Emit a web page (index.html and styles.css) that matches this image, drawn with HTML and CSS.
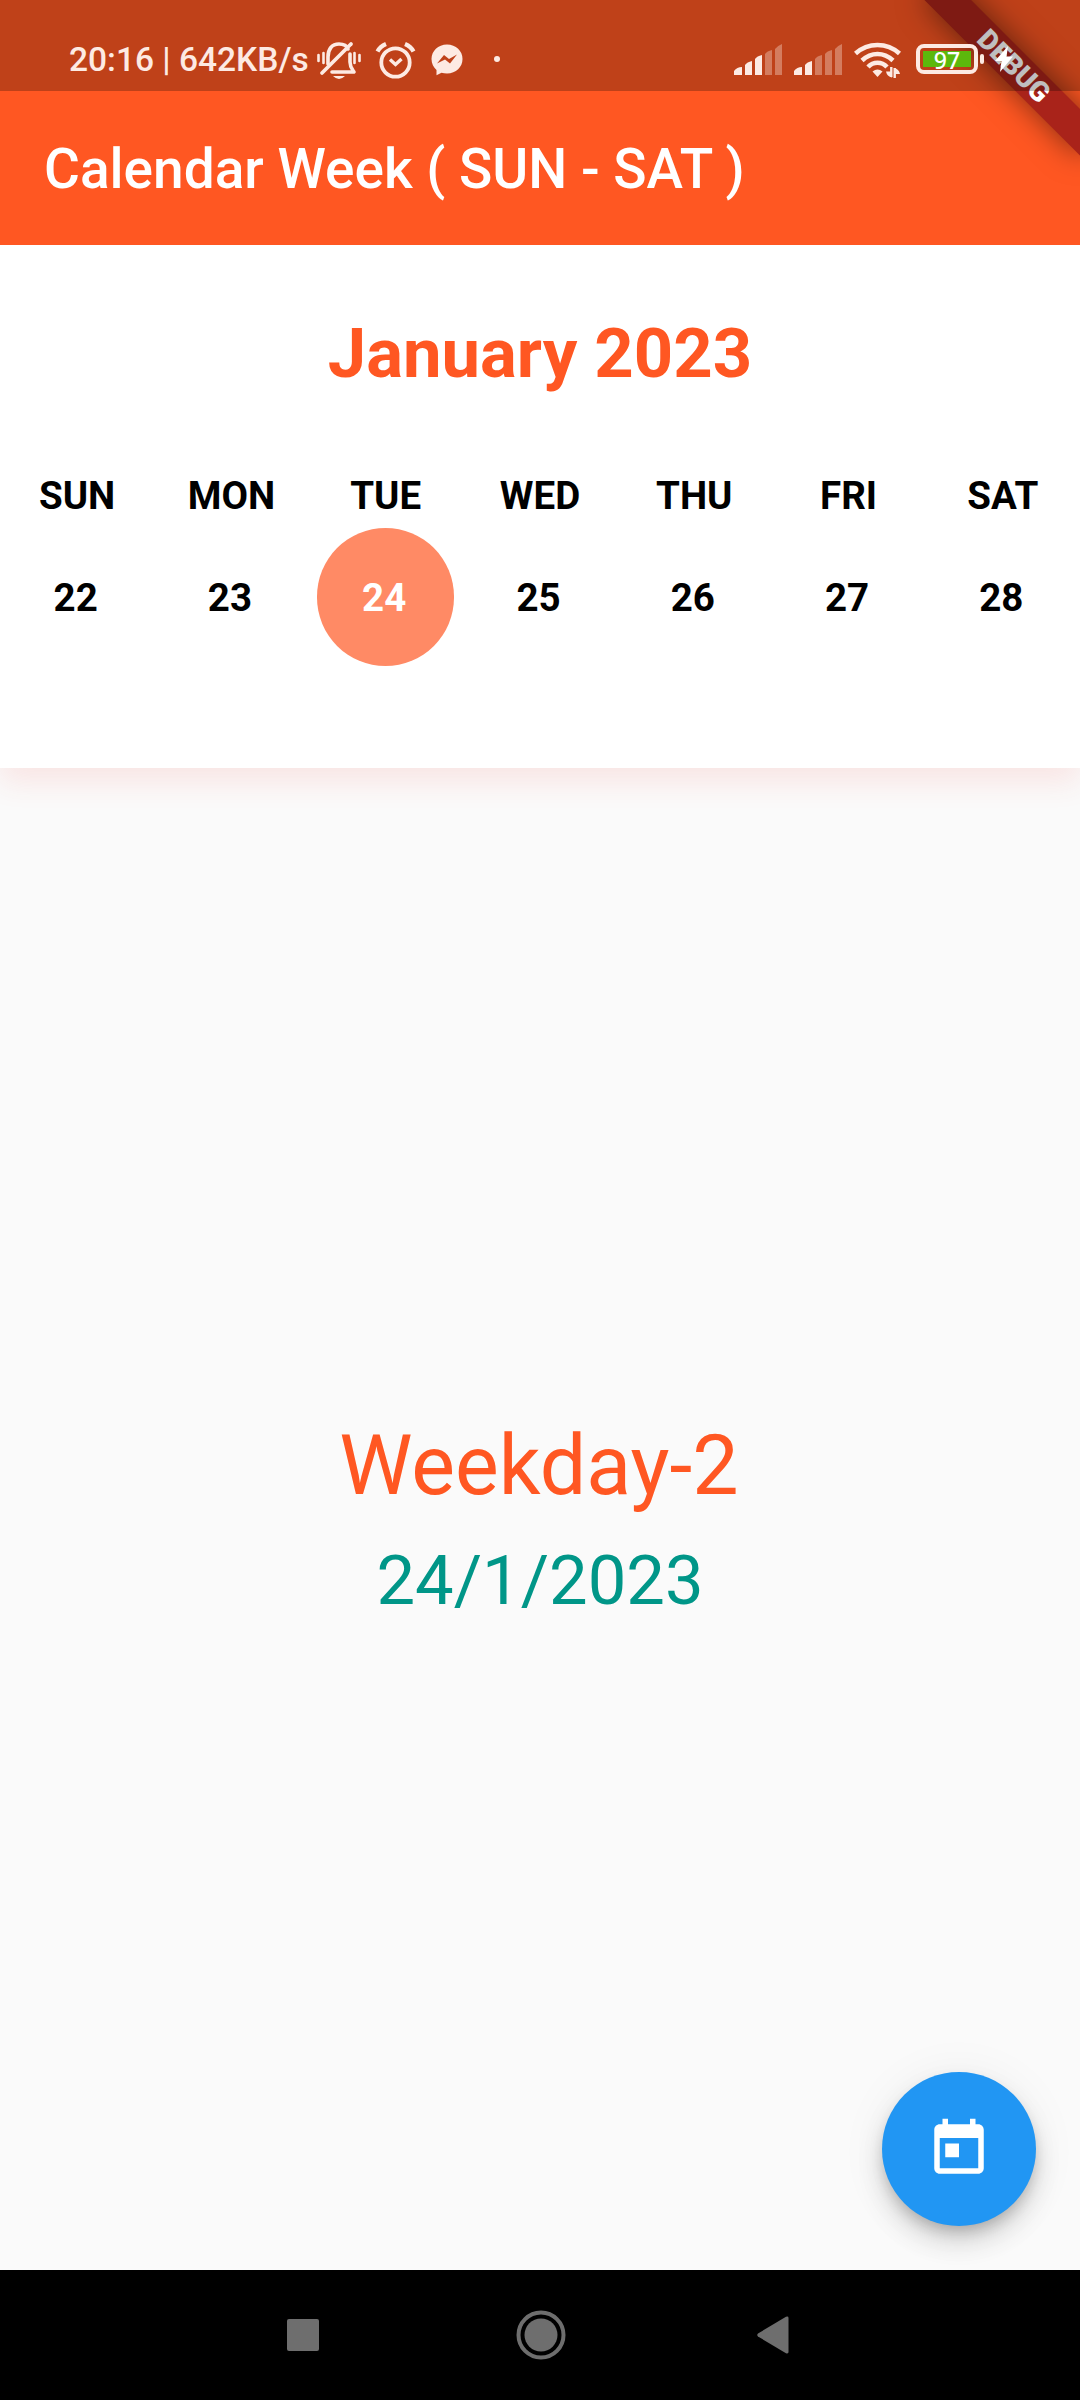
FILE: index.html
```html
<!DOCTYPE html>
<html lang="en">
<head>
<meta charset="utf-8">
<title>Calendar Week</title>
<link rel="stylesheet" href="styles.css">
</head>
<body>
<div class="screen">
  <header class="top">
    <div class="debug-banner">DEBUG</div>
    <div class="status-bar">
      <span class="status-text">20:16 | 642KB/s</span>
      <svg class="icon-mute" width="46" height="40" viewBox="0 0 46 40" fill="none" stroke="currentColor" stroke-linecap="round">
        <path d="M12 23V16C12 8 16 3 23 3C28 3 31 5 32 8M34 13V21C34 26 36 28 38 31H16" stroke-width="3.6" stroke-linejoin="round"/>
        <path d="M6 32L35 3" stroke-width="3.8"/>
        <path d="M17 35h12q-6 6-12 0z" fill="currentColor" stroke="none"/>
        <path d="M2.500 14v6M7.500 12v10M38.500 12v10M43.500 14v6" stroke-width="2.600"/>
      </svg>
      <svg class="icon-alarm" width="42" height="40" viewBox="0 0 42 40" fill="none" stroke="currentColor">
        <circle cx="20.500" cy="21.500" r="14.200" stroke-width="3.800"/>
        <path d="M15 18.500L20.500 23.500L26.500 18" stroke-width="3.400"/>
        <path d="M2.500 10.500Q5 5.500 11 3M30 3Q36 5.500 38.500 10.500" stroke-width="4.200"/>
      </svg>
      <svg class="icon-messenger" width="32" height="32" viewBox="0 0 32 32">
        <path fill="currentColor" d="M16 0.500C7 .5 .5 7 .5 15c0 4.500 2 8.300 5 11v5.200l5-2.500c1.700.5 3.500.8 5.500.8 9 0 15.500-6.500 15.500-14.500S25 .5 16 .5z"/>
        <path fill="#bf411a" d="M6 19.500l7-8.500 5 4 8-4.500-7 9-5-4z"/>
      </svg>
      <span class="more-dot"></span>
      <div class="status-right">
        <svg class="signal" width="50" height="32" viewBox="0 0 50 32" fill="currentColor">
          <path d="M0 31V27Q3 23 8 23V31zM11 31V21Q13 18 18 17V31zM21 31V15Q23 12 28 11V31z"/>
          <path opacity=".35" d="M31 31V10Q33 7 38 6V31zM41 31V5Q43 2 48 0V31z"/>
        </svg>
        <svg class="signal" width="50" height="32" viewBox="0 0 50 32" fill="currentColor">
          <path d="M0 31V27Q3 23 8 23V31zM11 31V21Q13 18 18 17V31z"/>
          <path opacity=".35" d="M21 31V15Q23 12 28 11V31zM31 31V10Q33 7 38 6V31zM41 31V5Q43 2 48 0V31z"/>
        </svg>
        <svg class="icon-wifi" width="48" height="36" viewBox="0 0 48 36" fill="none" stroke="currentColor">
          <path d="M1.500 11.500Q11 3 23.500 3T45.500 11.500" stroke-width="4.600"/>
          <path d="M8 18.500Q15 12 23.500 12T39 18.500" stroke-width="4.600"/>
          <path d="M14 25Q18 20.800 23.500 20.800T33 25" stroke-width="4.600"/>
          <path d="M18.500 29.500Q23.500 25.500 28.500 29.500L23.500 35z" fill="currentColor" stroke="none"/>
          <path d="M37.300 25v10M40.700 36v-10" stroke-width="2.400"/>
          <path d="M38 35.500q-5-1-6-6h6zM40 26q5 1 6 6h-6z" fill="currentColor" stroke="none"/>
        </svg>
        <div class="battery"><span class="battery-level">97</span></div>
        <span class="battery-nub"></span>
        <svg class="icon-bolt" width="18" height="26" viewBox="0 0 18 26"><path fill="#fff" d="M13 0L0 15h6.500L5 26 18 10.500h-6.500z"/></svg>
      </div>
    </div>
    <h1 class="app-title">Calendar Week ( SUN - SAT )</h1>
  </header>

  <section class="week-panel">
    <h2 class="month">January 2023</h2>
    <div class="week">
      <div class="day"><span class="name">SUN</span><span class="date">22</span></div>
      <div class="day"><span class="name">MON</span><span class="date">23</span></div>
      <div class="day"><span class="name">TUE</span><span class="date selected">24</span></div>
      <div class="day"><span class="name">WED</span><span class="date">25</span></div>
      <div class="day"><span class="name">THU</span><span class="date">26</span></div>
      <div class="day"><span class="name">FRI</span><span class="date">27</span></div>
      <div class="day"><span class="name">SAT</span><span class="date">28</span></div>
    </div>
  </section>

  <main class="content">
    <p class="weekday">Weekday-2</p>
    <p class="full-date">24/1/2023</p>
    <button class="fab" aria-label="Today">
      <svg width="66" height="66" viewBox="0 0 24 24" fill="#fff"><path d="M19 3h-1V1h-2v2H8V1H6v2H5c-1.110 0-1.990.9-1.990 2L3 19c0 1.100.890 2 2 2h14c1.100 0 2-.9 2-2V5c0-1.100-.9-2-2-2zm0 16H5V8h14v11zM7 10h5v5H7z"/></svg>
    </button>
  </main>

  <nav class="nav-bar">
    <svg width="32" height="32" viewBox="0 0 32 32"><rect width="32" height="32" rx="2"/></svg>
    <svg class="nav-home" width="50" height="50" viewBox="0 0 50 50"><circle cx="25" cy="25" r="22.500" fill="none" stroke="#6e6e6e" stroke-width="4"/><circle cx="25" cy="25" r="16.500"/></svg>
    <svg width="32" height="38" viewBox="0 0 32 38"><path d="M1 17.500L29 .8Q31.500 0 31.500 2V36Q31.500 38 29 37.200L1 20.500Q-.5 19 1 17.500z"/></svg>
  </nav>
</div>
</body>
</html>
```

FILE: styles.css
```css
* { box-sizing: border-box; margin: 0; padding: 0; }

body {
  width: 1080px;
  height: 2400px;
  overflow: hidden;
  background: #fafafa;
  font-family: Roboto, sans-serif;
}

.screen {
  display: flex;
  flex-direction: column;
  height: 2400px;
}

.top {
  position: relative;
  z-index: 1;
  height: 245px;
  overflow: hidden;
  background: #ff5722;
  color: #fff;
}

.debug-banner {
  position: absolute;
  z-index: 1;
  top: 0;
  left: 970px;
  width: 220px;
  height: 33px;
  background: #a9231a;
  box-shadow: 0 0 30px rgba(0, 0, 0, .5);
  font-size: 28.05px;
  font-weight: 900;
  line-height: 33px;
  text-align: center;
  transform-origin: 110px 0;
  transform: rotate(45deg) translateY(77px);
}

.status-bar {
  position: relative;
  z-index: 2;
  display: flex;
  align-items: flex-start;
  height: 91px;
  padding: 41px 70px 0 69px;
  background: rgba(0, 0, 0, .25);
  color: #fdeae3;
}

.status-text {
  width: 247px;
  margin-top: -1px;
  font-size: 33.5px;
  font-weight: 500;
  line-height: 40px;
  white-space: nowrap;
}

.icon-alarm { margin-left: 13px; }
.icon-messenger { margin: 3px 0 0 14px; }

.more-dot {
  width: 6px;
  height: 6px;
  margin: 15px 0 0 31px;
  border-radius: 50%;
  background: currentColor;
}

.status-right {
  display: flex;
  align-items: flex-start;
  margin-left: auto;
}

.signal { margin: 3px 10px 0 0; }
.icon-wifi { margin-top: 1px; }

.battery {
  width: 62px;
  height: 30px;
  margin: 3px 0 0 14px;
  padding: 3px;
  border: 4px solid currentColor;
  border-radius: 8px;
}

.battery-level {
  display: block;
  height: 16px;
  background: #5cb80c;
  color: #fff;
  font: 500 23px/18px "Noto Sans", sans-serif;
  text-align: center;
}

.battery-nub {
  width: 4px;
  height: 10px;
  margin: 13px 11px 0 2px;
  border-radius: 2px;
  background: currentColor;
}

.icon-bolt { margin: 5px -3px 0 0; }

.app-title {
  padding-left: 44px;
  font-size: 55px;
  font-weight: 500;
  line-height: 156px;
}

.week-panel {
  flex: none;
  height: 523px;
  padding-top: 69px;
  background: #fff;
  box-shadow: 0 14px 28px rgba(244, 67, 54, .11);
}

.month {
  color: #ff5722;
  font-size: 68.75px;
  font-weight: 700;
  line-height: 80px;
  text-align: center;
}

.week {
  display: grid;
  grid-template-columns: repeat(7, 1fr);
  margin-top: 79px;
}

.day {
  display: flex;
  flex-direction: column;
  align-items: center;
  font-size: 38.5px;
  font-weight: 700;
}

.name { line-height: 45px; }

.date {
  width: 137.5px;
  height: 137.5px;
  margin-top: 10px;
  padding-right: 3px;
  border-radius: 50%;
  line-height: 140px;
  text-align: center;
}

.selected {
  background: #ff8a65;
  color: #fff;
}

.content {
  position: relative;
  flex: 1;
  padding-top: 649px;
  text-align: center;
}

.weekday {
  padding-right: 2px;
  color: #ff5722;
  font-size: 82.5px;
  line-height: 97px;
}

.full-date {
  margin-top: 27px;
  color: #009688;
  font-size: 68.75px;
  line-height: 80px;
}

.fab {
  position: absolute;
  right: 44px;
  bottom: 44px;
  display: grid;
  place-items: center;
  width: 154px;
  height: 154px;
  border: 0;
  border-radius: 50%;
  background: #2196f3;
  box-shadow: 0 8px 14px -3px rgba(0, 0, 0, .2), 0 16px 27px rgba(0, 0, 0, .14), 0 3px 49px rgba(0, 0, 0, .06);
}

.nav-bar {
  display: flex;
  position: relative;
  justify-content: space-between;
  align-items: center;
  height: 130px;
  padding: 0 291px 0 287px;
  background: #000;
  fill: #6e6e6e;
}

.nav-home { margin-left: 5px; }
```
